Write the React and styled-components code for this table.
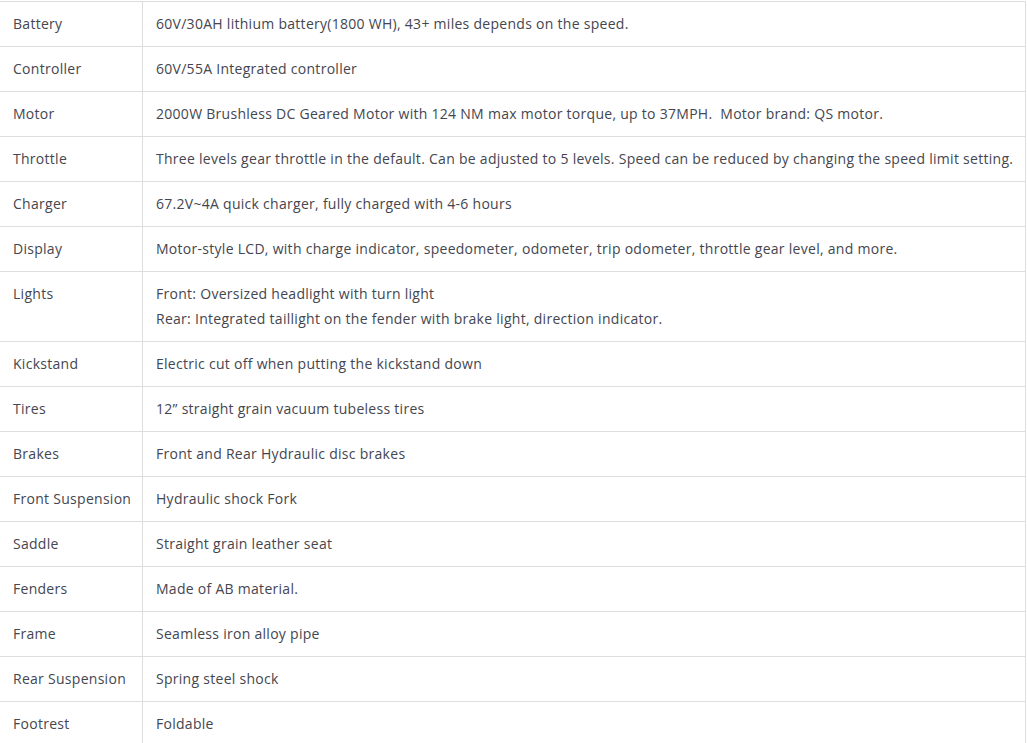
import React from "react";
import styled, { createGlobalStyle } from "styled-components";

const Global = createGlobalStyle`
  html, body { margin: 0; padding: 0; background: #fff; }
  body { font-family: "Open Sans", "Liberation Sans", sans-serif; }
`;

const Wrap = styled.div`
  margin: 1px 0 0 -1px;
  width: 1027px;
`;

const Table = styled.table`
  width: 100%;
  border-collapse: collapse;
  border: 1px solid #dddddd;
  table-layout: fixed;
`;

const Row = styled.tr`
  border-bottom: 1px solid #dddddd;
`;

const Cell = styled.td`
  border: 1px solid #dddddd;
  padding: 9px 6px 10px 13px;
  font-size: 14px;
  letter-spacing: 0.28px;
  line-height: 25px;
  color: #444650;
  vertical-align: top;
  white-space: ${(p) => (p.$label ? "nowrap" : "normal")};
  width: ${(p) => (p.$label ? "123px" : "auto")};
`;

const Line = styled.div``;

const rows = [
  ["Battery", ["60V/30AH lithium battery(1800 WH), 43+ miles depends on the speed."]],
  ["Controller", ["60V/55A Integrated controller"]],
  ["Motor", ["2000W Brushless DC Geared Motor with 124 NM max motor torque, up to 37MPH.\u00a0 Motor brand: QS motor."]],
  ["Throttle", ["Three levels gear throttle in the default. Can be adjusted to 5 levels. Speed can be reduced by changing the speed limit setting."]],
  ["Charger", ["67.2V~4A quick charger, fully charged with 4-6 hours"]],
  ["Display", ["Motor-style LCD, with charge indicator, speedometer, odometer, trip odometer, throttle gear level, and more."]],
  ["Lights", ["Front: Oversized headlight with turn light", "Rear: Integrated taillight on the fender with brake light, direction indicator."]],
  ["Kickstand", ["Electric cut off when putting the kickstand down"]],
  ["Tires", ["12\u201d straight grain vacuum tubeless tires"]],
  ["Brakes", ["Front and Rear Hydraulic disc brakes"]],
  ["Front Suspension", ["Hydraulic shock Fork"]],
  ["Saddle", ["Straight grain leather seat"]],
  ["Fenders", ["Made of AB material."]],
  ["Frame", ["Seamless iron alloy pipe"]],
  ["Rear Suspension", ["Spring steel shock"]],
  ["Footrest", ["Foldable"]],
];

export default function App() {
  return (
    <>
      <Global />
      <Wrap>
        <Table>
          <tbody>
            {rows.map(([label, lines]) => (
              <Row key={label}>
                <Cell $label>{label}</Cell>
                <Cell>
                  {lines.map((l, i) => (
                    <Line key={i}>{l}</Line>
                  ))}
                </Cell>
              </Row>
            ))}
          </tbody>
        </Table>
      </Wrap>
    </>
  );
}
